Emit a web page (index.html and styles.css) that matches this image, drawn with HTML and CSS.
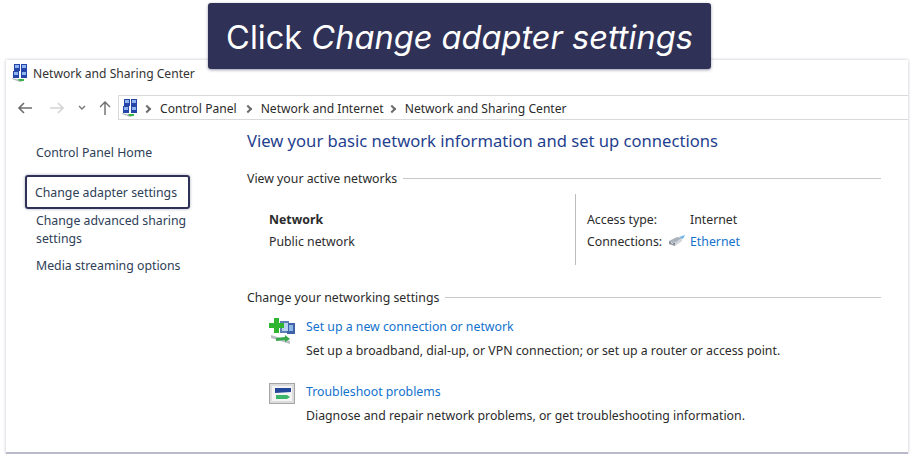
FILE: index.html
```html
<!DOCTYPE html>
<html lang="en">

<head>
    <meta charset="UTF-8">
    <meta name="viewport" content="width=device-width, initial-scale=1.0">
    <title>Network and Sharing Center</title>
    <link rel="stylesheet" href="styles.css">
</head>

<body>
    <div class="banner">Click <em>Change adapter settings</em></div>

    <div class="window">
        <div class="titlebar">
            <svg class="net-icon" width="16" height="18" viewBox="0 0 16 18">
                <use href="#netglyph"></use>
            </svg>
            <span>Network and Sharing Center</span>
        </div>

        <div class="navbar">
            <svg class="nav-arrow" width="18" height="16" viewBox="0 0 18 16">
                <path d="M16 8H3M8 3L3 8l5 5" fill="none" stroke="#6d6d6d" stroke-width="1.6" />
            </svg>
            <svg class="nav-arrow next" width="18" height="16" viewBox="0 0 18 16">
                <path d="M2 8h13M10 3l5 5-5 5" fill="none" stroke="#d4d4d4" stroke-width="1.6" />
            </svg>
            <svg class="nav-caret" width="8" height="6" viewBox="0 0 8 6">
                <path d="M1 1l3 3 3-3" fill="none" stroke="#777" stroke-width="1.4" />
            </svg>
            <svg class="nav-up" width="14" height="16" viewBox="0 0 14 16">
                <path d="M7 15V2M2 7l5-5 5 5" fill="none" stroke="#6d6d6d" stroke-width="1.4" />
            </svg>
            <div class="address">
                <svg class="address-icon" width="16" height="18" viewBox="0 0 16 18">
                    <use href="#netglyph"></use>
                </svg>
                <span class="sep"></span><span>Control Panel</span>
                <span class="sep"></span><span>Network and Internet</span>
                <span class="sep last"></span><span>Network and Sharing Center</span>
            </div>
        </div>

        <div class="main">
            <aside class="sidebar">
                <a class="side-home">Control Panel Home</a>
                <a class="side-active">Change adapter settings</a>
                <a class="side-link">Change advanced sharing settings</a>
                <a class="side-link">Media streaming options</a>
            </aside>

            <div class="content">
                <h1>View your basic network information and set up connections</h1>

                <div class="section-title">View your active networks</div>
                <div class="active-network">
                    <div class="network-name">
                        <strong>Network</strong>
                        <span>Public network</span>
                    </div>
                    <div class="network-info">
                        <span>Access type:</span>
                        <span>Internet</span>
                        <span>Connections:</span>
                        <span class="conn">
                            <svg width="18" height="12" viewBox="0 0 18 12">
                                <path d="M1 6l8-4 5 1-7 5z" fill="#a9b2bb" />
                                <path d="M1 6l6 2v3l-6-2z" fill="#8a939c" />
                                <path d="M7 8l7-5v3l-7 5z" fill="#d0d6dc" />
                                <path d="M3 7l2 1v1l-2-1zM5 6l2 1-1 0z" fill="#eef1f4" />
                                <path d="M11 2l6-2-2 4z" fill="#6fb4ea" />
                            </svg>
                            <a>Ethernet</a>
                        </span>
                    </div>
                </div>

                <div class="section-title">Change your networking settings</div>
                <div class="task first">
                    <svg width="27" height="27" viewBox="0 0 27 27">
                        <rect x="11" y="3" width="9" height="12" fill="#5d7fb5" />
                        <rect x="18" y="5" width="8" height="11" fill="#3f63a8" />
                        <rect x="13" y="5" width="6" height="8" fill="#b7d3f0" />
                        <rect x="20" y="7" width="4" height="6" fill="#8fb6e6" />
                        <path d="M5 0h5v5h5v5h-5v5H5v-5H0V5h5z" fill="#2fb52f" />
                        <path d="M2 17l19 6v3L2 20z" fill="#b9bec4" />
                        <path d="M7 20l9-1v-2l5 4-5 3v-2l-9 1z" fill="#35a84a" />
                    </svg>
                    <div class="task-text">
                        <a>Set up a new connection or network</a>
                        <span>Set up a broadband, dial-up, or VPN connection; or set up a router or access point.</span>
                    </div>
                </div>
                <div class="task">
                    <svg width="27" height="21" viewBox="0 0 27 21">
                        <rect x="0.5" y="0.5" width="25" height="20" fill="#dcdcdc" stroke="#a5a5a5" />
                        <rect x="3" y="3" width="20" height="15" fill="#f4f4f4" />
                        <path d="M6 5h16v4l-16 1z" fill="#24469b" />
                        <path d="M7 12h11l3 2-3 2H7z" fill="#3bb56a" />
                    </svg>
                    <div class="task-text">
                        <a>Troubleshoot problems</a>
                        <span>Diagnose and repair network problems, or get troubleshooting information.</span>
                    </div>
                </div>
            </div>
        </div>
    </div>

    <!-- shared network icon -->
    <svg class="defs" width="0" height="0">
        <defs>
            <g id="netglyph">
                <path d="M2 0h6v7H2z" fill="#2546a8" />
                <path d="M9 0h6v7H9z" fill="#2546a8" />
                <path d="M1 7h6v7H1z" fill="#2546a8" />
                <path d="M9 7h6v7H9z" fill="#2546a8" />
                <rect x="3" y="1" width="4" height="3" fill="#8fb4ee" />
                <rect x="10" y="1" width="4" height="3" fill="#8fb4ee" />
                <rect x="2" y="8" width="4" height="3" fill="#8fb4ee" />
                <rect x="10" y="8" width="4" height="3" fill="#8fb4ee" />
                <path d="M0 14l8 2 3-1v2l-3 1-8-3z" fill="#b5bac0" />
                <path d="M6 15h6v2H7z" fill="#3bb54a" />
            </g>
        </defs>
    </svg>
</body>

</html>
```

FILE: styles.css
```css
body {
    margin: 0;
    background-color: #fff;
    font-family: "Noto Sans", Arial, sans-serif;
    font-size: 12.3px;
    color: #2b2b2b;
}

a {
    color: #1272cc;
}

.defs {
    position: absolute;
}

.banner {
    position: absolute;
    top: 3px;
    left: 208px;
    width: 503px;
    height: 66px;
    box-sizing: border-box;
    background-color: #2f3157;
    border-radius: 3px;
    box-shadow: 0 1px 3px rgba(47, 49, 87, 0.5);
    color: #fff;
    font-family: Inter, sans-serif;
    font-size: 32.6px;
    line-height: 69px;
    text-align: center;
    white-space: pre;
}

.window {
    margin: 60px 4px 0 6px;
    height: 394px;
    box-sizing: border-box;
    background-color: #fff;
    border-bottom: 2px solid #b9bacb;
    box-shadow: 0 0 3px rgba(47, 49, 87, 0.3);
}

.titlebar {
    display: flex;
    align-items: center;
    gap: 5px;
    height: 26px;
    padding-left: 6px;
    color: #333;
    font-size: 12.1px;
}

.navbar {
    display: flex;
    align-items: center;
    height: 25px;
    margin-top: 9px;
    padding-left: 10px;
}

.nav-arrow.next {
    margin-left: 14px;
}

.nav-caret {
    margin-left: 12px;
}

.nav-up {
    margin-left: 12px;
}

.address {
    flex: 1;
    display: flex;
    align-items: center;
    height: 25px;
    box-sizing: border-box;
    margin-left: 6px;
    padding: 2px 0 0 3px;
    border: 1px solid #d9d9d9;
    border-right: none;
    font-size: 12.1px;
}

.address-icon {
    margin: -2px -2px 0 0;
}

.sep {
    width: 4px;
    height: 4px;
    margin: 0 10px 0 8px;
    border-top: 2px solid #6d6d6d;
    border-right: 2px solid #6d6d6d;
    transform: rotate(45deg);
}

.sep.last {
    margin-left: 5px;
}

.main {
    display: flex;
}

.sidebar {
    width: 241px;
    padding-top: 23px;
    box-sizing: border-box;
    display: flex;
    flex-direction: column;
}

.side-home,
.side-link {
    color: #2e4057;
    margin-left: 30px;
    margin-right: 50px;
    line-height: 18px;
}

.side-home {
    margin-top: 1px;
}

.side-active {
    color: #2e4057;
    margin: 13px 0 3px 19px;
    width: 165px;
    height: 34px;
    box-sizing: border-box;
    padding-left: 8px;
    line-height: 32px;
    border: 2px solid #2f3157;
    border-radius: 3px;
    box-shadow: 0 0 3px rgba(47, 49, 87, 0.4);
}

.side-link + .side-link {
    margin-top: 9px;
}

.content {
    flex: 1;
    padding-right: 27px;
}

h1 {
    margin: 9px 0 0;
    font-size: 16.6px;
    font-weight: normal;
    line-height: 24px;
    color: #1f3f8f;
}

.section-title {
    display: flex;
    align-items: center;
    gap: 6px;
    height: 18px;
    margin-top: 16px;
}

.section-title::after {
    content: "";
    flex: 1;
    border-top: 1px solid #c8c8c8;
}

.active-network {
    display: flex;
    height: 71px;
    margin-top: 7px;
    margin-bottom: 23px;
}

.network-name {
    display: flex;
    flex-direction: column;
    gap: 4px;
    width: 328px;
    padding: 17px 0 0 22px;
    box-sizing: border-box;
    line-height: 18px;
}

.network-info {
    display: grid;
    grid-template-columns: 103px auto;
    grid-auto-rows: 18px;
    row-gap: 4px;
    align-content: start;
    padding: 17px 0 0 11px;
    border-left: 1px solid #bdbdbd;
}

.conn {
    display: flex;
    align-items: flex-start;
    gap: 4px;
    margin-left: -22px;
}

.conn svg {
    margin-top: 2px;
}

.task {
    display: flex;
    gap: 10px;
    margin: 23px 0 0 22px;
}

.task.first {
    margin-top: 12px;
}

.task-text {
    display: flex;
    flex-direction: column;
    gap: 6px;
    line-height: 18px;
}
```
